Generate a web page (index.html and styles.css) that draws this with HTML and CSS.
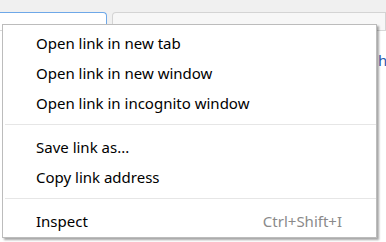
FILE: index.html
```html
<!DOCTYPE html>
<html lang="en">
<head>
  <meta charset="UTF-8">
  <title>Context menu</title>
  <link rel="stylesheet" href="styles.css">
</head>
<body>
  <div class="toolbar">
    <div class="field active"><span class="peek">n</span></div>
    <div class="field plain"></div>
  </div>
  <div class="page">
    <span class="peek-right">h</span>
  </div>

  <div class="context-menu">
    <div class="item">Open link in new tab</div>
    <div class="item">Open link in new window</div>
    <div class="item">Open link in incognito window</div>
    <div class="sep"></div>
    <div class="item">Save link as...</div>
    <div class="item">Copy link address</div>
    <div class="sep"></div>
    <div class="item">Inspect <span class="shortcut">Ctrl+Shift+I</span></div>
  </div>
</body>
</html>
```

FILE: styles.css
```css
* { margin: 0; padding: 0; box-sizing: border-box; }
html, body {
  height: 100%;
  background: #f0f0f0;
  font-family: 'Noto Sans', sans-serif;
  overflow: hidden;
}
body {
  display: flex;
  flex-direction: column;
}
.toolbar {
  display: flex;
  gap: 5px;
  padding-top: 12px;
  height: 30px;
}
.field {
  height: 100%;
  border: 1px solid #d4d4d4;
  border-bottom: none;
  background: #f7f7f7;
}
.field.active {
  width: 109px;
  margin-left: -2px;
  border-color: #6ea8e8;
  border-radius: 0 4px 0 0;
  background: #fff;
  padding: 9px 0 0 3px;
  line-height: 1;
}
.field.plain {
  flex: 1;
  border-radius: 4px 0 0 0;
}
.peek {
  color: #b86a18;
  font-size: 14px;
}
.page {
  flex: 1;
  background: #fff;
  border-top: 1px solid #d8d8d8;
  padding: 18px 0 0 378px;
}
.peek-right {
  color: #2a5db0;
  font-size: 15px;
}
.context-menu {
  position: absolute;
  left: 2px;
  top: 24px;
  width: 375px;
  height: 214px;
  background: #fff;
  border: 1px solid #bcbcbc;
  box-shadow: 2px 2px 2px rgba(0,0,0,0.35);
  padding-top: 3px;
  color: #000;
  font-size: 15px;
}
.item {
  height: 30px;
  display: flex;
  align-items: center;
  justify-content: space-between;
  padding: 0 34px 0 33px;
}
.shortcut {
  color: #8a8a8a;
}
.sep {
  height: 1px;
  background: #e6e6e6;
  margin: 6px 0 7px 2px;
}
```
